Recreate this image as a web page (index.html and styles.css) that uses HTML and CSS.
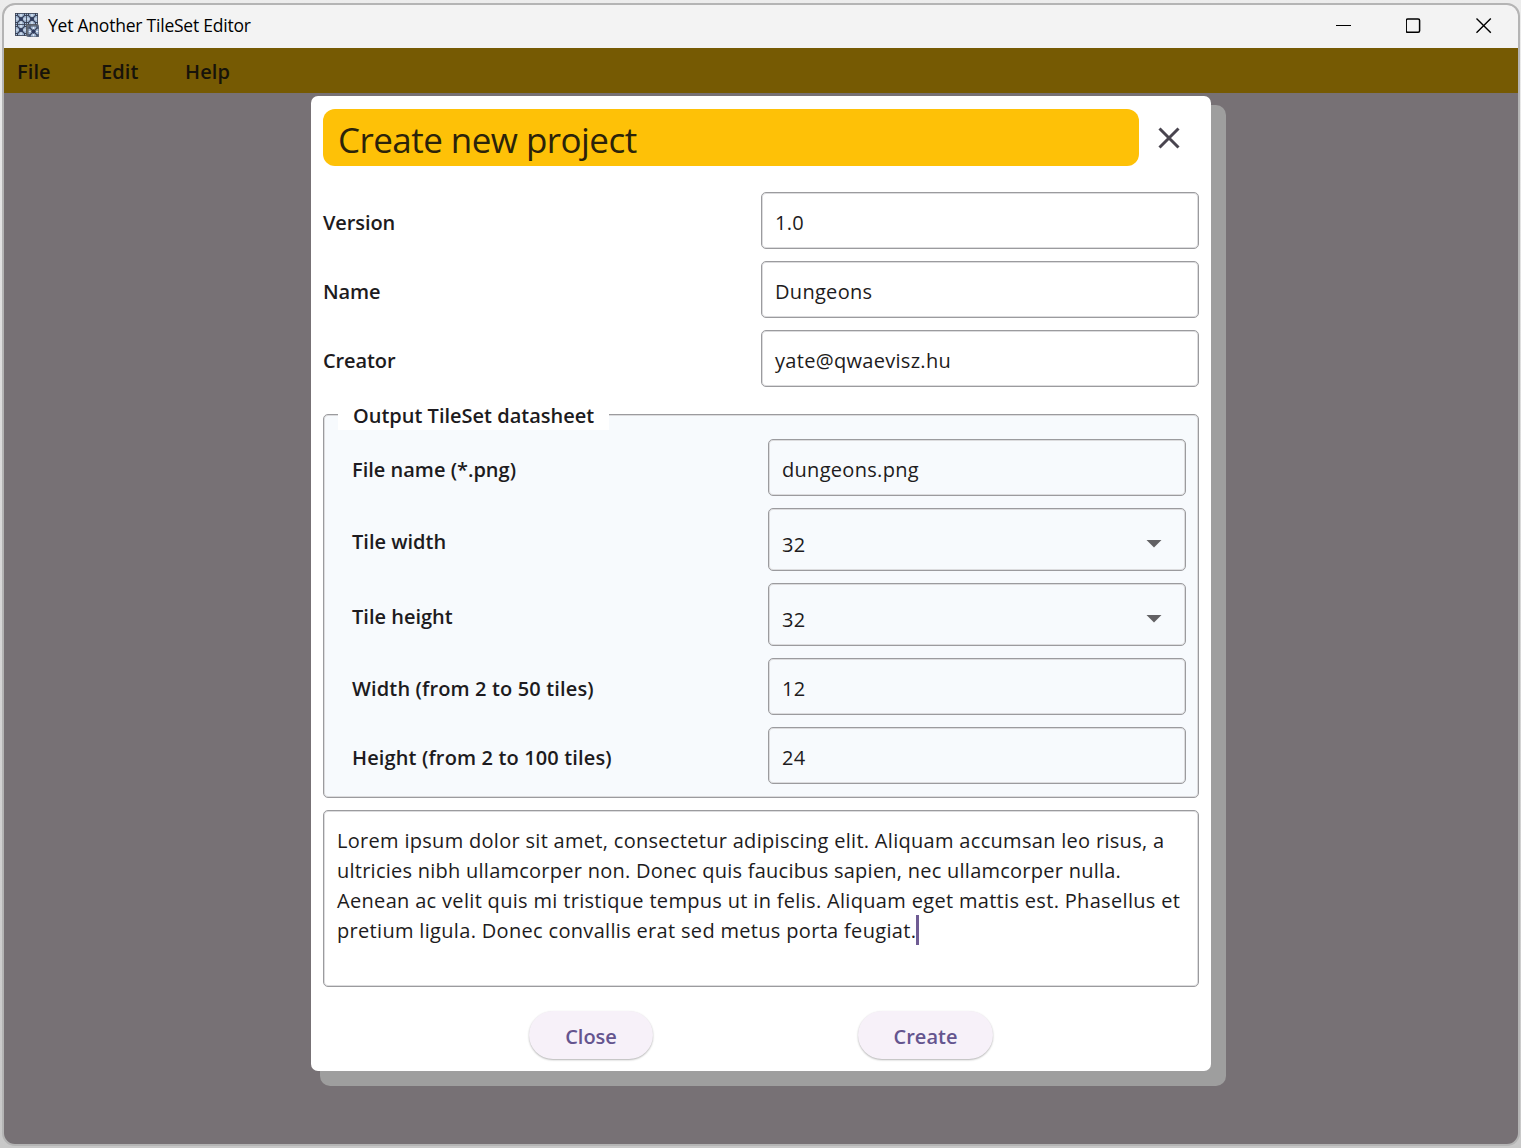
FILE: index.html
```html
<!DOCTYPE html>
<html lang="en">
<head>
<meta charset="utf-8">
<title>Yet Another TileSet Editor</title>
<link rel="stylesheet" href="styles.css">
</head>
<body>
<div class="window">
  <header class="titlebar">
    <svg class="app-icon" width="24" height="24" viewBox="0 0 24 24">
      <defs>
        <g id="tile">
          <rect width="12" height="12" fill="#a3b9d4"/>
          <path d="M2.500 0V2.500H0M9.500 0V2.500H12M0 9.500H2.500V12M12 9.500H9.500V12" fill="none" stroke="#39435a"/>
          <path d="M6 1V11M1 6H11" stroke="#e4edf7" stroke-width="1.200"/>
          <path d="M2 2L10 10M10 2L2 10" stroke="#39435a" stroke-width="1.200"/>
          <path d="M6 3.500L8.500 6L6 8.500L3.500 6Z" fill="#2f3c5e"/>
          <rect x=".5" y=".5" width="11" height="11" fill="none" stroke="#3a4152" stroke-width=".8"/>
        </g>
      </defs>
      <use href="#tile"/><use href="#tile" x="11"/><use href="#tile" y="11"/>
      <rect x="11.500" y="11.500" width="12" height="12" fill="#666"/>
      <use href="#tile" x="12.500" y="12.500"/>
    </svg>
    <span class="window-title">Yet Another TileSet Editor</span>
    <div class="controls">
      <svg width="16" height="16" viewBox="0 0 16 16"><path d="M0 7.500H15"/></svg>
      <svg width="16" height="16" viewBox="0 0 16 16"><rect class="max" x=".2" y=".9" width="13.400" height="13.400" rx="1.500"/></svg>
      <svg width="16" height="16" viewBox="0 0 16 16"><path class="x" d="M.5 .5L14.800 14.800M14.800 .5L.5 14.800"/></svg>
    </div>
  </header>
  <nav class="menubar"><span>File</span><span>Edit</span><span>Help</span></nav>
  <main class="workspace">
    <section class="dialog">
      <div class="dialog-head">
        <h1>Create new project</h1>
        <svg class="dismiss" width="22" height="22" viewBox="0 0 22 22"><path d="M1.500 1.500L20.500 20.500M20.500 1.500L1.500 20.500"/></svg>
      </div>
      <div class="row"><label>Version</label><div class="field">1.0</div></div>
      <div class="row"><label>Name</label><div class="field">Dungeons</div></div>
      <div class="row"><label>Creator</label><div class="field">yate@qwaevisz.hu</div></div>
      <div class="group">
        <div class="legend">Output TileSet datasheet</div>
        <div class="row"><label>File name (*.png)</label><div class="field">dungeons.png</div></div>
        <div class="row"><label>Tile width</label><div class="field select">32<svg width="16" height="8" viewBox="0 0 16 8"><path d="M.5 0H15.500L8 7.500Z"/></svg></div></div>
        <div class="row"><label>Tile height</label><div class="field select">32<svg width="16" height="8" viewBox="0 0 16 8"><path d="M.5 0H15.500L8 7.500Z"/></svg></div></div>
        <div class="row"><label class="wide">Width (from 2 to 50 tiles)</label><div class="field">12</div></div>
        <div class="row"><label class="wide">Height (from 2 to 100 tiles)</label><div class="field">24</div></div>
      </div>
      <div class="notes">
        <div>Lorem ipsum dolor sit amet, consectetur adipiscing elit. Aliquam accumsan leo risus, a</div>
        <div class="tight">ultricies nibh ullamcorper non. Donec quis faucibus sapien, nec ullamcorper nulla.</div>
        <div class="loose">Aenean ac velit quis mi tristique tempus ut in felis. Aliquam eget mattis est. Phasellus et</div>
        <div class="loose last">pretium ligula. Donec convallis erat sed metus porta feugiat.<i class="caret"></i></div>
      </div>
      <div class="actions"><button class="close">Close</button><button class="create">Create</button></div>
    </section>
  </main>
</div>
</body>
</html>
```
FILE: styles.css
```css
* { box-sizing: border-box; }
body {
  margin: 0;
  height: 1148px;
  padding: 3px 1px 2px 2px;
  overflow: hidden;
  background: linear-gradient(#ececec, #dedede 30%, #c8c8c8);
  font-family: "Open Sans", "Noto Sans", sans-serif;
  color: #1d1b20;
}
.window {
  height: 1143px;
  border: 2px solid #b4b4b4;
  border-radius: 13px;
  overflow: hidden;
  background: #777175;
}
.titlebar {
  height: 43px;
  padding: 0 26px 0 11px;
  display: flex;
  align-items: center;
  background: #f3f3f3;
}
.app-icon { margin-top: -4px; }
.window-title { margin: -4px 0 0 9px; font-size: 17.500px; letter-spacing: -.22px; color: #000; }
.controls { margin: -2px 0 0 auto; display: flex; gap: 54px; }
.controls svg { fill: none; stroke: #000; stroke-width: 1; }
.controls .max { stroke-width: 1.500; }
.controls .x { stroke-width: 1.400; }
.menubar {
  height: 45px;
  padding: 0 13px;
  display: flex;
  line-height: 48px;
  background: #765a03;
  color: #17130a;
  font-size: 20px;
  font-weight: 600;
  letter-spacing: .1px;
}
.menubar span { width: 84px; }
.workspace { display: flex; justify-content: center; padding-top: 3px; }
.dialog {
  width: 900px;
  height: 975px;
  padding: 13px 12px 0;
  border-radius: 7px;
  background: #fff;
  box-shadow: 12px 12px 0 3px #9e9e9e;
}
.dialog-head { display: flex; align-items: center; margin-bottom: 26px; }
h1 {
  margin: 0;
  width: 816px;
  height: 57px;
  padding-left: 15px;
  border-radius: 12px;
  background: #fec107;
  color: #2b230a;
  font-size: 35px;
  font-weight: 400;
  line-height: 61px;
  letter-spacing: -.55px;
}
.dismiss { margin-left: 19px; fill: none; stroke: #49454f; stroke-width: 3; }
.row { display: flex; align-items: center; justify-content: space-between; margin-bottom: 12px; }
label { font-size: 20px; font-weight: 600; line-height: 30px; letter-spacing: -.1px; white-space: nowrap; padding-top: 4px; }
.field {
  width: 438px;
  height: 57px;
  padding: 3px 13px 0;
  display: flex;
  align-items: center;
  border: 1px solid #9b9b9e;
  border-radius: 5px;
  box-shadow: inset 0 0 0 1px #dcdcde;
  font-size: 20px;
  letter-spacing: .3px;
}
.group {
  height: 384px;
  margin: 27px 0 12px;
  padding: 0 12px 0 27px;
  border: 1px solid #9b9b9e;
  border-radius: 5px;
  background: #f7fafd;
  box-shadow: inset 0 0 0 1px #dcdcde;
}
.legend {
  width: 271px;
  height: 30px;
  margin: -15px 0 9px -13px;
  padding-left: 15px;
  background: #fff;
  font-size: 20px;
  font-weight: 600;
  line-height: 32px;
  white-space: nowrap;
}
.group label { padding: 5px 0 0 1px; letter-spacing: 0; }
.group .wide { letter-spacing: .1px; }
.group .wide { letter-spacing: .14px; }
.group .field { width: 418px; }
.group .select { height: 63px; padding-top: 9px; padding-right: 23px; justify-content: space-between; }
.select svg { fill: #626164; }
.notes {
  height: 177px;
  padding: 15px 13px;
  border: 1px solid #9b9b9e;
  border-radius: 5px;
  box-shadow: inset 0 0 0 1px #dcdcde;
  font-size: 20px;
  line-height: 30px;
  letter-spacing: .3px;
  white-space: nowrap;
}
.tight { letter-spacing: .25px; }
.loose { letter-spacing: .32px; }
.last { display: flex; }
.caret { width: 3px; height: 30px; margin-top: -1px; background: #6f5c93; }
.actions { display: flex; gap: 205px; margin: 24px 0 0 206px; }
button {
  height: 48px;
  padding: 2px 0 0;
  border: 0;
  border-radius: 25px;
  background: #f7f1f9;
  box-shadow: 0 1px 2px rgba(0,0,0,.3);
  color: #65558f;
  font: 600 20px "Open Sans", sans-serif;
}
.close { width: 124px; }
.create { width: 135px; }
```
